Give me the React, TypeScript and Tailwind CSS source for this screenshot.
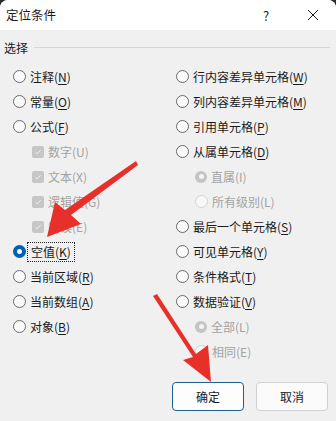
import React from "react";

const font = { fontFamily: '"Noto Sans CJK SC", "Noto Sans", sans-serif' };

function Radio({ checked = false, disabled = false }: { checked?: boolean; disabled?: boolean }) {
  if (checked && !disabled) {
    return (
      <span className="w-[13px] h-[13px] rounded-full bg-[#005fb8] flex items-center justify-center shrink-0">
        <span className="w-[5px] h-[5px] rounded-full bg-white" />
      </span>
    );
  }
  if (checked && disabled) {
    return (
      <span className="w-[12px] h-[12px] rounded-full bg-[#c4c4c4] flex items-center justify-center shrink-0">
        <span className="w-[5px] h-[5px] rounded-full bg-[#f4f4f4]" />
      </span>
    );
  }
  return (
    <span
      className={
        "w-[13px] h-[13px] rounded-full border shrink-0 " +
        (disabled ? "border-[#d4d4d4] bg-[#f7f7f7]" : "border-[#6a6a6a] bg-[#fafafa]")
      }
    />
  );
}

function Check() {
  return (
    <span className="w-[12px] h-[12px] rounded-[2px] bg-[#c6c6c6] flex items-center justify-center shrink-0">
      <svg width="8" height="8" viewBox="0 0 8 8" fill="none">
        <path d="M1.5 4.2 L3.2 5.8 L6.6 2.2" stroke="#f4f4f4" strokeWidth="1" />
      </svg>
    </span>
  );
}

function Label({ text, k, disabled }: { text: string; k: string; disabled?: boolean }) {
  return (
    <span className={disabled ? "text-[#a3a3a3]" : "text-[#1a1a1a]"}>
      {text}(
      {disabled ? k : <span className="underline underline-offset-2">{k}</span>})
    </span>
  );
}

function Row({
  children,
  indent = false,
}: {
  children: React.ReactNode;
  indent?: boolean;
}) {
  return (
    <div className={"h-[25px] flex items-center gap-[4px] " + (indent ? "pl-[19px]" : "")}>
      {children}
    </div>
  );
}

export default function App() {
  return (
    <div className="w-[336px] h-[421px] bg-[#2b2b2b] overflow-hidden relative text-[12px] leading-none" style={font}>
      <div className="w-full h-full flex flex-col rounded-t-[8px] overflow-hidden bg-[#f0f0f0]">
        {/* Title bar */}
        <div className="h-[30px] bg-white flex items-center pl-[6px] shrink-0">
          <span className="text-[12.5px] text-[#1a1a1a] flex-1">定位条件</span>
          <span className="text-[13px] text-[#1a1a1a] w-[10px] mr-[34px]">?</span>
          <svg width="12" height="12" viewBox="0 0 12 12" className="mr-[17px]">
            <path d="M1 1 L11 11 M11 1 L1 11" stroke="#1a1a1a" strokeWidth="1" />
          </svg>
        </div>
        {/* Group header */}
        <div className="flex items-center h-[34px] pl-[4px] pr-[6px] pt-[1px]">
          <span className="text-[#1a1a1a]">选择</span>
          <div className="flex-1 h-px bg-[#d6d6d6] ml-[6px]" />
        </div>
        {/* Columns */}
        <div className="flex pl-[13px] pt-[0px]">
          <div className="w-[163px] flex flex-col">
            <Row><Radio /><Label text="注释" k="N" /></Row>
            <Row><Radio /><Label text="常量" k="O" /></Row>
            <Row><Radio /><Label text="公式" k="F" /></Row>
            <Row indent><Check /><Label text="数字" k="U" disabled /></Row>
            <Row indent><Check /><Label text="文本" k="X" disabled /></Row>
            <Row indent><Check /><Label text="逻辑值" k="G" disabled /></Row>
            <Row indent><Check /><Label text="错误" k="E" disabled /></Row>
            <Row>
              <Radio checked />
              <span className="outline-1 outline-dotted outline-[#222] outline-offset-[3px] ml-[1px]">
                <Label text="空值" k="K" />
              </span>
            </Row>
            <Row><Radio /><Label text="当前区域" k="R" /></Row>
            <Row><Radio /><Label text="当前数组" k="A" /></Row>
            <Row><Radio /><Label text="对象" k="B" /></Row>
          </div>
          <div className="flex-1 flex flex-col">
            <Row><Radio /><Label text="行内容差异单元格" k="W" /></Row>
            <Row><Radio /><Label text="列内容差异单元格" k="M" /></Row>
            <Row><Radio /><Label text="引用单元格" k="P" /></Row>
            <Row><Radio /><Label text="从属单元格" k="D" /></Row>
            <Row indent><Radio checked disabled /><Label text="直属" k="I" disabled /></Row>
            <Row indent><Radio disabled /><Label text="所有级别" k="L" disabled /></Row>
            <Row><Radio /><Label text="最后一个单元格" k="S" /></Row>
            <Row><Radio /><Label text="可见单元格" k="Y" /></Row>
            <Row><Radio /><Label text="条件格式" k="T" /></Row>
            <Row><Radio /><Label text="数据验证" k="V" /></Row>
            <Row indent><Radio checked disabled /><Label text="全部" k="L" disabled /></Row>
            <Row indent><Radio disabled /><Label text="相同" k="E" disabled /></Row>
          </div>
        </div>
        {/* Buttons */}
        <div className="flex justify-end gap-[12px] pr-[8px] mt-[18px]">
          <button className="w-[72px] h-[29px] rounded-[4px] border-[1.5px] border-[#1f5f8f] bg-[#fdfdfd] text-[#1a1a1a] text-[12px]">
            确定
          </button>
          <button className="w-[72px] h-[29px] rounded-[4px] border border-[#d0d0d0] bg-[#fbfbfb] text-[#1a1a1a] text-[12px]">
            取消
          </button>
        </div>
      </div>

      {/* Red arrows */}
      <svg className="absolute left-0 top-0 pointer-events-none" width="336" height="421" viewBox="0 0 336 421">
        <path d="M136 161 L138 165 L71 215 L81 224 L47 237 L55 202 L65 210 Z" fill="#e8302a" />
        <path d="M153 296 L157 294 L196 354 L208 345 L211 382 L183 360 L193 357 Z" fill="#e8302a" />
      </svg>
    </div>
  );
}
